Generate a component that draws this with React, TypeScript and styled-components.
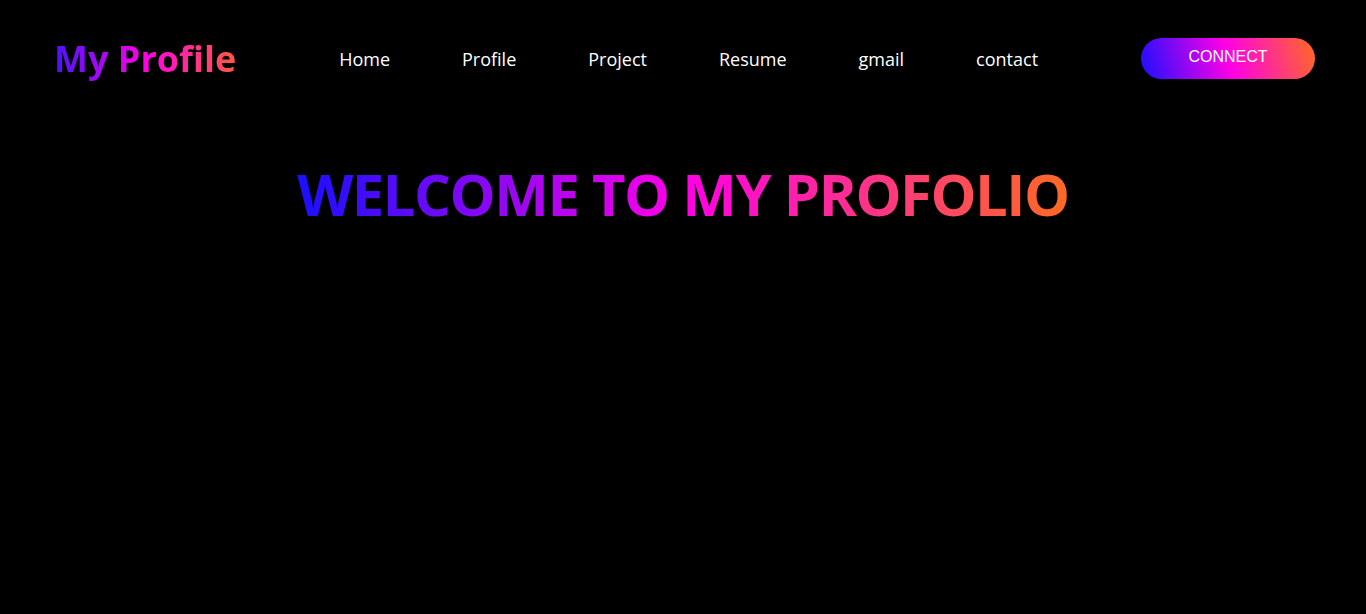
import styled, { createGlobalStyle } from 'styled-components';

const GlobalStyle = createGlobalStyle`
  html, body {
    margin: 0;
    padding: 0;
    background: #000;
    height: 100%;
  }
  body {
    font-family: 'Open Sans', 'Noto Sans', sans-serif;
    color: #fff;
  }
  #root {
    min-height: 100vh;
    background: #000;
  }
`;

const brandGradient = 'linear-gradient(to right, #1a0fff, #ff00e6, #ff6a22)';

const Page = styled.div`
  min-height: 100vh;
  background: #000;
`;

const Header = styled.header`
  display: flex;
  align-items: center;
  justify-content: space-between;
  padding: 37px 51px 0 54px;
`;

const Logo = styled.h2`
  margin: 0;
  font-size: 36px;
  font-weight: 700;
  line-height: 44px;
  background: linear-gradient(to right, #4a12ff, #ff00e6 50%, #ff5a40);
  -webkit-background-clip: text;
  background-clip: text;
  color: transparent;
`;

const NavList = styled.ul`
  display: flex;
  align-items: center;
  gap: 72px;
  margin: 0;
  padding: 0;
  list-style: none;
`;

const NavItem = styled.li`
  a {
    color: #fff;
    text-decoration: none;
    font-size: 18px;
  }
`;

const ConnectButton = styled.button`
  width: 174px;
  height: 41px;
  margin-bottom: 2px;
  border: none;
  border-radius: 21px;
  background: linear-gradient(75deg, #1a0fff 0%, #ff00e6 50%, #ff6a22 100%);
  color: #fff;
  font-family: 'Liberation Sans', Arial, sans-serif;
  font-size: 16px;
  cursor: pointer;
  padding: 0 0 2px;
`;

const Hero = styled.section`
  display: flex;
  justify-content: center;
  padding-top: 75px;
`;

const Title = styled.h1`
  margin: 0;
  font-size: 58px;
  font-weight: 700;
  letter-spacing: -1.5px;
  line-height: 1.3;
  background: ${brandGradient};
  -webkit-background-clip: text;
  background-clip: text;
  color: transparent;
`;

const links = ['Home', 'Profile', 'Project', 'Resume', 'gmail', 'contact'];

function App() {
  return (
    <Page>
      <GlobalStyle />
      <Header>
        <Logo>My Profile</Logo>
        <NavList>
          {links.map((link) => (
            <NavItem key={link}>
              <a href="#">{link}</a>
            </NavItem>
          ))}
        </NavList>
        <ConnectButton>CONNECT</ConnectButton>
      </Header>
      <Hero>
        <Title>WELCOME TO MY PROFOLIO</Title>
      </Hero>
    </Page>
  );
}

export default App;
